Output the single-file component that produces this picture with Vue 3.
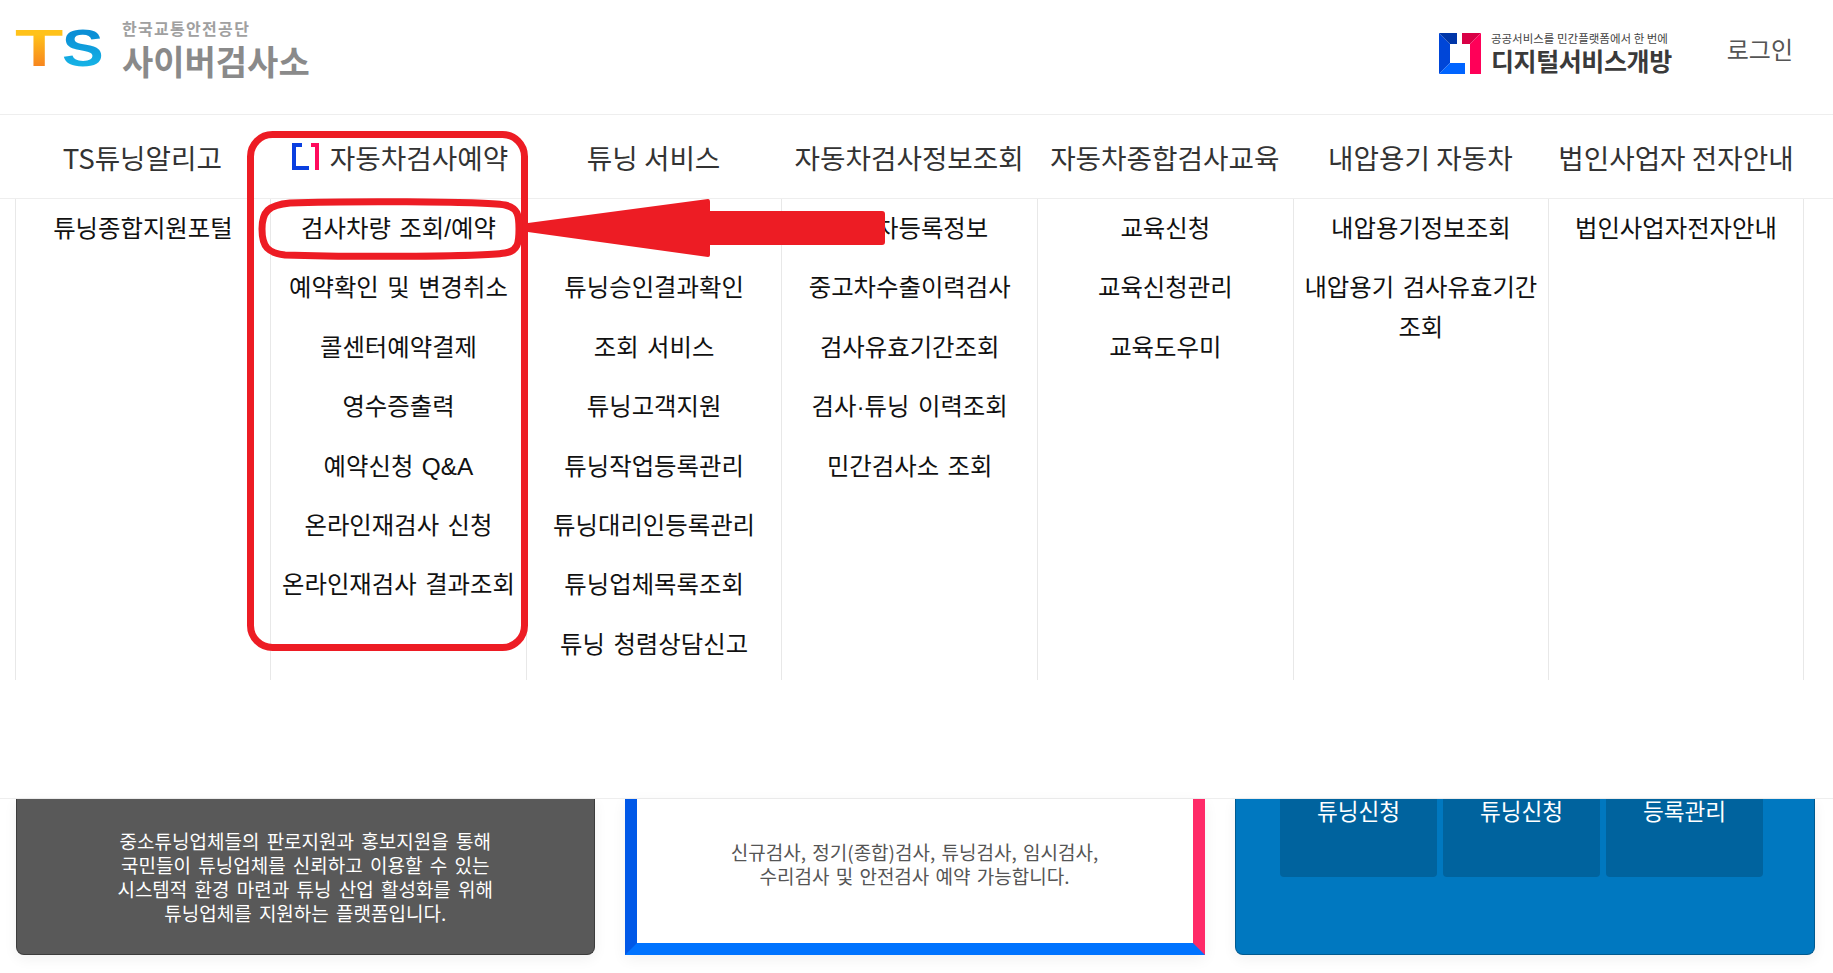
<template>
  <div class="page">
    <header class="top">
      <div class="brand">
        <div class="ts-mark"><span class="ts-t"><i>T</i></span><span class="ts-s"><i>S</i></span></div>
        <div class="brand-text">
          <div class="brand-sub">한국교통안전공단</div>
          <div class="brand-main">사이버검사소</div>
        </div>
      </div>
      <div class="top-right">
        <div class="dsg">
          <svg class="dsg-icon" viewBox="0 0 42 41">
            <polygon points="0,0 11,11 11,30 0,41" fill="#0046d8" />
            <polygon points="0,0 18,0 18,11 11,11" fill="#0036a8" />
            <polygon points="0,41 11,30 26,30 26,41" fill="#0064ff" />
            <polygon points="23,0 42,0 31,11 23,11" fill="#d80046" />
            <polygon points="31,11 42,0 42,41 31,41" fill="#ff0058" />
          </svg>
          <div class="dsg-text">
            <div class="dsg-sub">공공서비스를 민간플랫폼에서 한 번에</div>
            <div class="dsg-main">디지털서비스개방</div>
          </div>
        </div>
        <a class="login">로그인</a>
      </div>
    </header>

    <nav class="gnb">
      <div v-for="col in menus" :key="col.title" class="gnb-item" :class="{ marked: col.mark }">
        <svg v-if="col.mark" class="gnb-mark" viewBox="0 0 27 27">
          <path d="M10 2H2v23h15" fill="none" stroke="#0a3fe0" stroke-width="4" />
          <path d="M19 2h6v25" fill="none" stroke="#ff0a5c" stroke-width="4" />
        </svg>
        {{ col.title }}
      </div>
    </nav>

    <section class="mega">
      <ul v-for="col in menus" :key="col.title" class="mega-col">
        <li v-for="item in col.items" :key="item">{{ item }}</li>
      </ul>
    </section>

    <section class="cards">
      <div class="card card-dark">
        <p>중소튜닝업체들의 판로지원과 홍보지원을 통해<br />국민들이 튜닝업체를 신뢰하고 이용할 수 있는<br />시스템적 환경 마련과 튜닝 산업 활성화를 위해<br />튜닝업체를 지원하는 플랫폼입니다.</p>
      </div>
      <div class="card card-frame">
        <p>신규검사, 정기(종합)검사, 튜닝검사, 임시검사,<br />수리검사 및 안전검사 예약 가능합니다.</p>
      </div>
      <div class="card card-blue">
        <div class="tile">튜닝신청</div>
        <div class="tile">튜닝신청</div>
        <div class="tile">등록관리</div>
      </div>
    </section>

    <!-- red annotation drawn over the screenshot -->
    <svg class="annot" viewBox="0 0 1833 973">
      <rect x="250.5" y="134.5" width="274" height="513" rx="22" fill="none" stroke="#ed1c24" stroke-width="7" />
      <path d="M290 203C340 201 480 201 505 205C518 208 519 215 519 229C519 243 518 251 505 253C480 257 340 257 285 255C268 253 262 247 262 229C262 212 268 205 290 203Z" fill="none" stroke="#ed1c24" stroke-width="7" />
      <path d="M528 223L708 199Q710 199 710 202V211H882Q885 211 885 214V242Q885 245 882 245H710V255Q710 257 708 257L528 232Z" fill="#ed1c24" />
    </svg>
  </div>
</template>

<script setup>
const menus = [
  { title: 'TS튜닝알리고', items: ['튜닝종합지원포털'] },
  {
    title: '자동차검사예약',
    mark: true,
    items: ['검사차량 조회/예약', '예약확인 및 변경취소', '콜센터예약결제', '영수증출력', '예약신청 Q&A', '온라인재검사 신청', '온라인재검사 결과조회'],
  },
  {
    title: '튜닝 서비스',
    items: ['튜닝신청', '튜닝승인결과확인', '조회 서비스', '튜닝고객지원', '튜닝작업등록관리', '튜닝대리인등록관리', '튜닝업체목록조회', '튜닝 청렴상담신고'],
  },
  {
    title: '자동차검사정보조회',
    items: ['자동차등록정보', '중고차수출이력검사', '검사유효기간조회', '검사·튜닝 이력조회', '민간검사소 조회'],
  },
  { title: '자동차종합검사교육', items: ['교육신청', '교육신청관리', '교육도우미'] },
  { title: '내압용기 자동차', items: ['내압용기정보조회', '내압용기 검사유효기간 조회'] },
  { title: '법인사업자 전자안내', items: ['법인사업자전자안내'] },
]
</script>

<style>
html,
body {
  margin: 0;
  background: #fff;
}
</style>

<style scoped>
.page {
  position: relative;
  width: 1833px;
  height: 973px;
  overflow: hidden;
  font-family: "Noto Sans CJK KR", "Noto Sans", sans-serif;
  color: #222;
  background: #fff;
}

.top {
  height: 114px;
  display: flex;
  justify-content: space-between;
  padding: 0 40px 0 16px;
  border-bottom: 1px solid #eee;
}

.brand {
  display: flex;
  align-items: flex-start;
  gap: 21px;
  padding-top: 18px;
}

.ts-mark {
  display: flex;
  width: 85px;
  margin-top: 3px;
  font-family: "Liberation Sans", sans-serif;
  font-weight: 700;
  font-size: 52px;
  line-height: 54px;
}

.ts-mark i {
  display: inline-block;
  font-style: normal;
  transform-origin: left center;
  -webkit-background-clip: text;
  background-clip: text;
  color: transparent;
}

.ts-t {
  width: 46px;
}

.ts-t i {
  margin-left: -1px;
  transform: scaleX(1.52);
  background-image: linear-gradient(180deg, #ffc21a 25%, #f7841e 85%);
}

.ts-s {
  width: 39px;
}

.ts-s i {
  transform: scaleX(1.2);
  background-image: linear-gradient(180deg, #0b8fd6 25%, #16b4e6 85%);
}

.brand-sub {
  font-size: 16px;
  line-height: 21px;
  font-weight: 700;
  color: #a0a0a0;
  letter-spacing: 1.3px;
}

.brand-main {
  margin-top: 3px;
  font-family: "Liberation Sans", "Noto Sans CJK KR", sans-serif;
  font-size: 34px;
  line-height: 42px;
  font-weight: 700;
  color: #8a8a8a;
}

.top-right {
  display: flex;
  align-items: flex-start;
  gap: 55px;
}

.dsg {
  display: flex;
  gap: 10px;
  padding-top: 33px;
}

.dsg-icon {
  width: 42px;
  height: 41px;
}

.dsg-text {
  margin-top: -1px;
}

.dsg-sub {
  font-size: 11.5px;
  line-height: 13px;
  color: #444;
  white-space: nowrap;
}

.dsg-main {
  margin-top: 2px;
  font-family: "Liberation Sans", "Noto Sans CJK KR", sans-serif;
  font-size: 25px;
  line-height: 30px;
  font-weight: 700;
  color: #3a3a3a;
  letter-spacing: -0.4px;
  white-space: nowrap;
}

.login {
  font-size: 24px;
  line-height: 34px;
  color: #555;
  padding-top: 32px;
}

.gnb,
.mega {
  display: grid;
  grid-template-columns: repeat(7, 255.6px);
  padding-left: 14.6px;
}

.gnb {
  height: 83px;
  border-bottom: 1px solid #eee;
}

.gnb-item {
  display: flex;
  align-items: center;
  justify-content: center;
  gap: 11px;
  font-size: 27.7px;
  color: #333;
  white-space: nowrap;
}

.gnb-item.marked {
  padding-left: 4px;
}

.gnb-mark {
  width: 27px;
  height: 27px;
}

.mega {
  height: 481px;
  padding-bottom: 118px;
  border-bottom: 1px solid #eee;
}

.mega-col {
  list-style: none;
  margin: 0;
  padding: 0 10px;
  border-left: 1px solid #e8e8e8;
  text-align: center;
}

.mega-col:last-child {
  border-right: 1px solid #e8e8e8;
}

.mega-col li {
  padding: 10px 0;
  font-family: "Liberation Sans", "Noto Sans CJK KR", sans-serif;
  font-size: 24.4px;
  line-height: 39.4px;
  word-spacing: 1.7px;
  word-break: keep-all;
  color: #111;
}

.cards {
  display: grid;
  grid-template-columns: 578.5px 580px 580px;
  column-gap: 30px;
  padding-left: 16px;
  height: 156px;
}

.card {
  display: flex;
  box-sizing: border-box;
  font-size: 19px;
  line-height: 24px;
  text-align: center;
  box-shadow: 0 4px 14px rgba(0, 0, 0, 0.06);
}

.card p {
  margin: 0;
}

.card-dark {
  align-items: center;
  justify-content: center;
  background: #595959;
  color: #fff;
  word-spacing: 3px;
  border: 1px solid #3c3c3c;
  border-top: 0;
  border-radius: 0 0 8px 8px;
}

.card-frame {
  align-items: center;
  justify-content: center;
  padding-bottom: 14px;
  color: #555;
  word-spacing: 2px;
  border-left: 12px solid #0058e8;
  border-bottom: 12px solid #0073ff;
  border-right: 12px solid #ff2a68;
}

.card-blue {
  justify-content: center;
  gap: 6px;
  align-items: flex-start;
  padding-right: 6px;
  background: #0078c0;
  border: 1px solid #005a90;
  border-top: 0;
  border-radius: 0 0 8px 8px;
}

.tile {
  width: 157px;
  height: 78px;
  background: #00639e;
  border-radius: 0 0 4px 4px;
  color: #fff;
  font-size: 22.6px;
  line-height: 24px;
}

.annot {
  position: absolute;
  left: 0;
  top: 0;
  width: 1833px;
  height: 973px;
  pointer-events: none;
}
</style>
